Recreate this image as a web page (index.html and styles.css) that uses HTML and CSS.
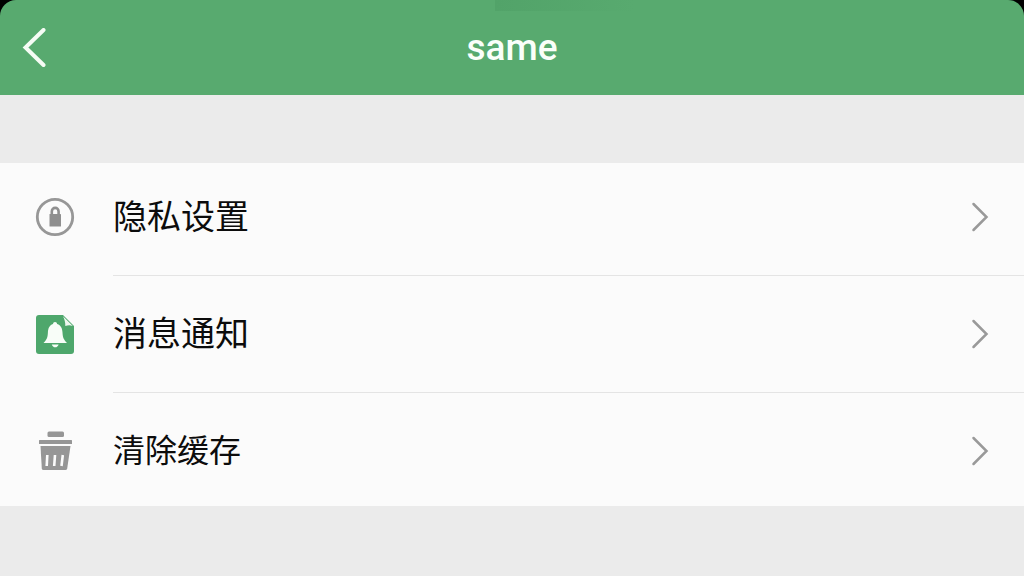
FILE: index.html
```html
<!DOCTYPE html>
<html lang="zh-CN">
<head>
  <meta charset="UTF-8">
  <meta name="viewport" content="width=device-width, initial-scale=1.0">
  <title>same</title>
  <link rel="stylesheet" href="styles.css">
</head>
<body>
  <div class="top">
    <header class="header">
      <button class="back" type="button" aria-label="返回">
        <svg width="24" height="40" viewBox="0 0 24 40" fill="none" stroke="#f6fcf5" stroke-width="4" stroke-linecap="round">
          <path d="M21.5 2 L3.5 19.5 L21.5 37"/>
        </svg>
      </button>
      <h1 class="title">same</h1>
    </header>
  </div>

  <!-- Settings list -->
  <ul class="list">
    <li class="item">
      <a class="link" href="#privacy">
        <svg class="icon" viewBox="0 0 40 40">
          <circle cx="20" cy="20" r="17.7" fill="none" stroke="#979797" stroke-width="2.8"/>
          <path d="M16.8 18 V14.5 a3.4 3.6 0 0 1 6.8 0 V18" fill="none" stroke="#8f8f8f" stroke-width="2.6"/>
          <rect x="14.5" y="17" width="11.5" height="12.5" rx="0.6" fill="#8f8f8f"/>
        </svg>
        <span class="label">隐私设置</span>
        <svg class="arrow" viewBox="0 0 18 32">
          <path d="M2.5 3 L15.5 16 L2.5 29"/>
        </svg>
      </a>
    </li>
    <li class="item">
      <a class="link" href="#notice">
        <svg class="icon" viewBox="0 0 40 40">
          <path d="M4 1 H28 L39 12 V37 a3 3 0 0 1 -3 3 H4 a3 3 0 0 1 -3 -3 V4 a3 3 0 0 1 3 -3 Z" fill="#4ea76c"/>
          <path d="M28 2.2 L37.8 12 C35 11 33 11.2 30.3 12 C30.5 8.5 29.5 5 28 2.2 Z" fill="#eef7f0"/>
          <path d="M20 8 C21.3 8 22 8.7 22.1 10 C26 11.2 27.3 14.5 27.5 18.5 C27.7 23 28.5 25.5 32 29 H8.5 C12 25.5 12.7 23 12.9 18.5 C13.1 14.5 14.3 11.2 18 10 C18.1 8.7 18.8 8 20 8 Z" fill="#f8fdf8"/>
          <path d="M16.8 30.5 H23.6 C23 32.4 21.8 33.3 20.2 33.3 S17.4 32.4 16.8 30.5 Z" fill="#f8fdf8"/>
        </svg>
        <span class="label">消息通知</span>
        <svg class="arrow" viewBox="0 0 18 32">
          <path d="M2.5 3 L15.5 16 L2.5 29"/>
        </svg>
      </a>
    </li>
    <li class="item">
      <a class="link" href="#cache">
        <svg class="icon" viewBox="0 0 40 40" fill="#969696">
          <rect x="12.5" y="0.5" width="16.5" height="5.5" rx="1.5"/>
          <rect x="4" y="9" width="33" height="4" rx="0.6"/>
          <path d="M5.5 15 H35.5 L32.2 37.5 Q31.9 39 30.4 39 H8.5 Q7 39 6.8 37.5 Z"/>
          <path d="M12.3 24 L11.7 35 M20 24 L19.2 35 M27.8 24 L26.5 35" fill="none" stroke="#fbfbfb" stroke-width="2.6"/>
        </svg>
        <span class="label label-small">清除缓存</span>
        <svg class="arrow" viewBox="0 0 18 32">
          <path d="M2.5 3 L15.5 16 L2.5 29"/>
        </svg>
      </a>
    </li>
  </ul>
</body>
</html>
```
FILE: styles.css
```css
body {
  margin: 0;
  background-color: #ebebeb;
  font-family: Roboto, "Noto Sans CJK SC", sans-serif;
}

/* black behind the rounded header corners */
.top {
  background-color: #000;
}

.header {
  display: grid;
  grid-template-columns: 68px 1fr 68px;
  align-items: center;
  height: 95px;
  border-radius: 16px 16px 0 0;
  background-color: #58aa6f;
  background-image: linear-gradient(to right, #52a369, #58aa6f);
  background-repeat: no-repeat;
  background-size: 140px 11px;
  background-position: 56% 0;
}

.back {
  display: flex;
  justify-content: center;
  padding: 0;
  border: none;
  background: none;
  cursor: pointer;
}

.title {
  margin: 0;
  color: #fafffa;
  font-size: 37px;
  font-weight: 500;
  line-height: 48px;
  text-align: center;
}

.list {
  margin: 68px 0 0;
  padding: 0;
  list-style: none;
  background-color: #fbfbfb;
}

.item {
  padding-left: 35px;
}

.link {
  display: grid;
  grid-template-columns: 40px 1fr 18px;
  column-gap: 38px;
  align-items: center;
  padding: 38px 35px 38px 0;
  color: #0c0c0c;
  text-decoration: none;
}

/* divider starts under the label, not under the icon */
.item + .item .link {
  background: linear-gradient(#e4e4e4, #e4e4e4) no-repeat 78px 0 / 100% 1px;
  padding-top: 39px;
}

.item:first-child .link {
  padding-top: 34px;
}

.item:last-child .link {
  padding-bottom: 35px;
}

.icon {
  width: 40px;
  height: 40px;
}

.label {
  font-size: 34px;
  line-height: 40px;
}

.label-small {
  font-size: 32px;
}

.arrow {
  width: 18px;
  height: 32px;
  fill: none;
  stroke: #999;
  stroke-width: 2.5;
  stroke-linecap: round;
}
```
